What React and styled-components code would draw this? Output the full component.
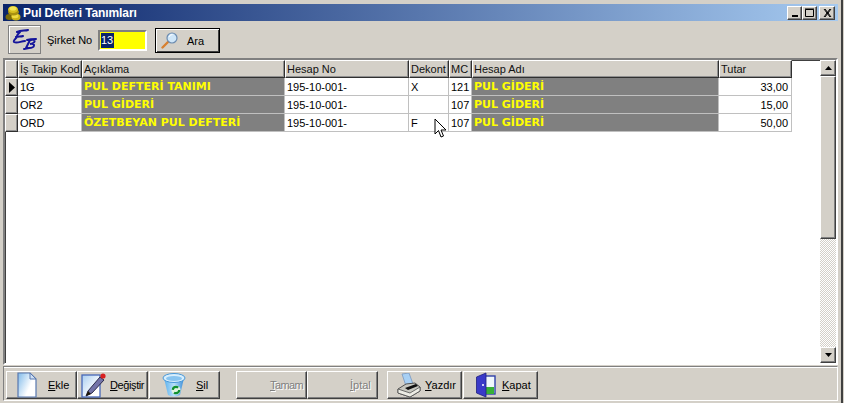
import React from "react";
import styled, { createGlobalStyle, css } from "styled-components";

const Global = createGlobalStyle`
  html, body { margin: 0; padding: 0; background: #d4d0c8; }
  body { font-family: "Liberation Sans", Arial, sans-serif; font-size: 11px; color: #000; overflow: hidden; }
`;

const COLS = "13px 64px 203px 124px 40px 23px 247px 73px";

const Win = styled.div`
  box-sizing: border-box;
  width: 843px; height: 403px;
  background: #d4d0c8;
  padding: 4px 3px 2px 3px;
  display: flex; flex-direction: column;
  border-right: 2px solid #404040;
  position: relative;
`;
const TitleBar = styled.div`
  height: 17px; flex: none;
  background: linear-gradient(90deg, #0a246a, #a6caf0);
  display: flex; align-items: center; padding: 0 3px 0 2px;
  color: #fff; font: bold 12px "Liberation Sans", sans-serif;
  gap: 2px;
`;
const TitleText = styled.span` flex: 1; letter-spacing: -0.1px; `;
const WinBtns = styled.div` display: flex; `;
const raised = css`
  background: #d4d0c8;
  border: 1px solid;
  border-color: #fff #404040 #404040 #fff;
  box-shadow: inset -1px -1px 0 #808080;
  box-sizing: border-box;
`;
const WinBtn = styled.div`
  ${raised}
  width: ${p => (p.$gap ? 16 : 15)}px; height: 14px;
  margin-left: ${p => (p.$gap ? 2 : 0)}px;
  display: flex; align-items: center; justify-content: center;
`;
const ToolBar = styled.div`
  height: 37px; flex: none;
  display: flex; align-items: center;
  padding: 0 0 0 5px;
`;
const LogoBtn = styled.div`
  box-sizing: border-box;
  width: 33px; height: 29px;
  border: 1px solid #808080;
  box-shadow: inset 1px 1px 0 #fff;
  display: flex; align-items: center; justify-content: center;
`;
const Label = styled.span`
  margin-left: 6px; width: 51px; font-size: 11px;
`;
const CodeInput = styled.div`
  box-sizing: border-box;
  margin-top: 2px;
  width: 49px; height: 21px;
  background: #ff0;
  border: 2px solid; border-color: #808080 #fff #fff #808080;
  padding: 1px 0 0 1px;
  font-size: 11px; line-height: 15px;
`;
const Sel = styled.span`background: #0a246a; color: #fff; display: inline-block; height: 15px; padding-right: 1px;`;
const AraBtn = styled.div`
  box-sizing: border-box;
  margin: 2px 0 0 8px;
  width: 65px; height: 25px;
  background: #d4d0c8;
  border: 1px solid #000;
  box-shadow: inset 1px 1px 0 #fff, inset -1px -1px 0 #404040;
  display: flex; align-items: center; padding-left: 5px;
  font-size: 11px;
  span { margin-left: 9px; }
`;
const GridBox = styled.div`
  flex: none;
  height: 307px; box-sizing: border-box;
  background: #fff;
  border: 2px solid; border-color: #808080 #fff #fff #808080;
  display: flex;
  box-shadow: inset 1px 1px 0 #404040;
`;
const Table = styled.div` flex: 1; `;
const Row = styled.div`
  display: grid; grid-template-columns: ${COLS};
  height: 18px;
`;
const headStyle = css`
  background: #d4d0c8;
  box-sizing: border-box;
  border: 1px solid; border-color: #fff #303030 #303030 #fff;
  box-shadow: inset -1px -1px 0 #909090;
`;
const HeadCell = styled.div`
  ${headStyle}
  padding: 1px 0 0 1px; line-height: 14px; font-size: 11px;
  white-space: nowrap; overflow: hidden; color: #111;
`;
const Indicator = styled.div`
  ${headStyle}
  display: flex; align-items: center; justify-content: center;
`;
const Cell = styled.div`
  box-sizing: border-box;
  border-right: 1px solid #c0c0c0; border-bottom: 1px solid #c0c0c0;
  background: ${p => (p.$dark ? "#808080" : "#fff")};
  color: ${p => (p.$dark ? "#ffff00" : "#000")};
  font: ${p => (p.$dark ? 'bold 11px "DejaVu Sans", sans-serif' : '11px "Liberation Sans", sans-serif')};
  text-align: ${p => (p.$right ? "right" : "left")};
  padding: 0 ${p => (p.$right ? 3 : 0)}px 0 2px; line-height: 18px;
  white-space: nowrap; overflow: hidden;
`;
const Scroll = styled.div`
  width: 16px; flex: none;
  display: flex; flex-direction: column;
  background-color: #fff;
  background-image: repeating-conic-gradient(#d4d0c8 0 25%, #fff 0 50%);
  background-size: 2px 2px;
`;
const ScrollBtn = styled.div`
  ${raised}
  width: 16px; height: 16px; flex: none;
  display: flex; align-items: center; justify-content: center;
`;
const Thumb = styled.div`
  ${raised}
  width: 16px; height: 163px; flex: none;
`;
const Track = styled.div` flex: 1; `;
const Footer = styled.div`
  flex: 1; display: flex; align-items: flex-start;
  padding: 4px 0 0 2px;
  margin-top: 1px;
  border: 1px solid; border-color: #808080 #fff #fff #808080;
  box-shadow: inset 0 1px 0 #fff;
`;
const Btn = styled.div`
  ${raised}
  height: 28px; width: ${p => p.$w}px;
  margin-left: ${p => p.$ml || 0}px;
  display: flex; align-items: center;
  padding-left: ${p => p.$pl ?? 4}px;
  font-size: 11px; color: ${p => (p.$off ? "#808080" : "#000")};
  text-shadow: ${p => (p.$off ? "1px 1px 0 #fff" : "none")};
  letter-spacing: ${p => p.$ls || 0}px;
`;
const BtnLabel = styled.span`
  margin-left: ${p => p.$ml}px; white-space: nowrap;
`;
const Pointer = styled.svg`
  position: absolute; left: 434px; top: 118px;
`;

const HEADS = ["İş Takip Kod", "Açıklama", "Hesap No", "Dekont", "MC", "Hesap Adı", "Tutar"];
const ROWS = [
  ["1G", "PUL DEFTERİ TANIMI", "195-10-001-", "X", "121", "PUL GİDERİ", "33,00"],
  ["OR2", "PUL GİDERİ", "195-10-001-", "", "107", "PUL GİDERİ", "15,00"],
  ["ORD", "ÖZETBEYAN PUL DEFTERİ", "195-10-001-", "F", "107", "PUL GİDERİ", "50,00"],
];

const Coins = () => (
  <svg width="16" height="16" viewBox="0 0 16 16">
    <ellipse cx="4.5" cy="12" rx="4" ry="3" fill="#7a6a08" />
    <ellipse cx="11" cy="12" rx="4.5" ry="3.5" fill="#c8b018" />
    <ellipse cx="10" cy="11" rx="3.5" ry="2.2" fill="#f0dc40" />
    <ellipse cx="8.5" cy="7" rx="5.5" ry="3.5" fill="#a89010" />
    <ellipse cx="8" cy="4.5" rx="5" ry="3.5" fill="#d8c020" />
    <ellipse cx="8" cy="3.5" rx="3.5" ry="2" fill="#f4e658" />
  </svg>
);
const Logo = () => (
  <svg width="26" height="22" viewBox="0 0 26 22" fill="none" stroke="#14149a" strokeWidth="2" strokeLinecap="round">
    <path d="M5 3 C9 1 13 2 16 1 M8 3 C6 5 5 6 5 7 M4 8 C6 7 9 8 11 7 M5 8 C3 10 1 12 2 13 C5 15 9 12 13 12" />
    <path d="M15 11 C18 10 22 10 24 10 M18 11 L14 19 M19 11 C24 10 24 14 18 15 C24 14 23 19 17 19 L12 20" />
  </svg>
);
const Magnifier = () => (
  <svg width="17" height="17" viewBox="0 0 17 17">
    <path d="M7 10 L1.5 15.5" stroke="#d88030" strokeWidth="2.4" strokeLinecap="round" />
    <circle cx="11" cy="6" r="5" fill="#cfe6f8" stroke="#6c8cb0" strokeWidth="1.2" />
    <path d="M8 5 a3.5 3.5 0 0 1 3.5 -2.5" stroke="#fff" fill="none" />
  </svg>
);
const Doc = () => (
  <svg width="21" height="26" viewBox="0 0 21 26">
    <defs>
      <linearGradient id="dg" x1="0" y1="0.2" x2="1" y2="0.8"><stop offset="0" stopColor="#8fc2ec" /><stop offset="0.65" stopColor="#fff" /></linearGradient>
    </defs>
    <path d="M1 1 H13 L19 7 V25 H1 Z" fill="url(#dg)" stroke="#5878b0" strokeWidth="1.2" />
    <path d="M13 1 V7 H19 Z" fill="#cfe0f4" stroke="#5878b0" />
  </svg>
);
const Pencil = () => (
  <svg width="25" height="26" viewBox="0 0 25 26">
    <defs>
      <linearGradient id="pg" x1="0" y1="0" x2="1" y2="1"><stop offset="0" stopColor="#a8cdf0" /><stop offset="0.7" stopColor="#fff" /></linearGradient>
    </defs>
    <rect x="1" y="3" width="18" height="22" fill="url(#pg)" stroke="#4868b8" strokeWidth="1.3" />
    <path d="M7 19 L19 5 L23 8 L11 21 L5 24 Z" fill="#7474a8" stroke="#2c2c4c" strokeWidth="1" />
    <path d="M5 24 L7 19 L10 22 Z" fill="#201808" />
    <circle cx="22" cy="4" r="2.6" fill="#d82020" />
  </svg>
);
const Bin = () => (
  <svg width="24" height="26" viewBox="0 0 24 26">
    <defs>
      <linearGradient id="bg" x1="0" y1="0" x2="1" y2="0"><stop offset="0" stopColor="#5ab0ec" /><stop offset="0.5" stopColor="#b8e0fa" /><stop offset="1" stopColor="#3a8cd8" /></linearGradient>
    </defs>
    <path d="M2 6 L6 23 Q12 26 18 23 L22 6 Z" fill="url(#bg)" />
    <ellipse cx="12" cy="6" rx="11" ry="4.5" fill="#d8eefc" stroke="#4898d8" />
    <ellipse cx="12" cy="6.5" rx="8" ry="2.5" fill="#88c4f0" />
    <circle cx="14" cy="18" r="4.5" fill="#e0f4e0" />
    <circle cx="14" cy="18" r="3.2" fill="none" stroke="#109030" strokeWidth="2.2" strokeDasharray="7 3" />
  </svg>
);
const Printer = () => (
  <svg width="24" height="25" viewBox="0 0 24 25">
    <path d="M5 1 L12 0 L16 11 L9 13 Z" fill="#a8d0f4" stroke="#7898c0" strokeWidth="0.8" />
    <path d="M1 16 L9 11 L18 10 L23 14 L23 18 L13 24 L1 20 Z" fill="#c8c8c0" stroke="#505050" strokeWidth="1" />
    <path d="M1 16 L13 20 L23 14 L23 18 L13 24 L1 20 Z" fill="#ecece4" stroke="#505050" strokeWidth="0.8" />
    <path d="M8 15 L19 11 L21 13 L11 17 Z" fill="#101010" />
  </svg>
);
const Door = () => (
  <svg width="20" height="26" viewBox="0 0 20 26">
    <rect x="7" y="4" width="12" height="18" fill="#f0f8fc" stroke="#3040a8" strokeWidth="1.4" />
    <rect x="8" y="15" width="10" height="7" fill="#38b038" />
    <path d="M0.5 5 L10 1 V25 L0.5 21 Z" fill="#3a3ac8" stroke="#202080" strokeWidth="0.8" />
    <circle cx="7" cy="13" r="1" fill="#fff" />
  </svg>
);
const Cursor = () => (
  <Pointer width="13" height="21" viewBox="0 0 13 21">
    <path d="M1 1 V16 L4.5 12.5 L7 19 L9.5 18 L7 12 H12 Z" fill="#fff" stroke="#000" strokeWidth="1" />
  </Pointer>
);

export default function App() {
  return (
    <>
      <Global />
      <Win>
        <TitleBar>
          <Coins />
          <TitleText>Pul Defteri Tanımları</TitleText>
          <WinBtns>
            <WinBtn><svg width="8" height="8"><rect x="1" y="6" width="6" height="2" /></svg></WinBtn>
            <WinBtn><svg width="9" height="9"><path d="M0.5 1.5 H8.5 V8.5 H0.5 Z M0 1 H9" fill="none" stroke="#000" /></svg></WinBtn>
            <WinBtn $gap><svg width="9" height="8"><path d="M1 0 L7 8 M2 0 L8 8 M7 0 L1 8 M8 0 L2 8" stroke="#000" /></svg></WinBtn>
          </WinBtns>
        </TitleBar>
        <ToolBar>
          <LogoBtn><Logo /></LogoBtn>
          <Label>Şirket No</Label>
          <CodeInput><Sel>13</Sel></CodeInput>
          <AraBtn><Magnifier /><span>Ara</span></AraBtn>
        </ToolBar>
        <GridBox>
          <Table>
            <Row>
              <Indicator />
              {HEADS.map(h => <HeadCell key={h}>{h}</HeadCell>)}
            </Row>
            {ROWS.map((r, i) => (
              <Row key={r[0]}>
                <Indicator>
                  {i === 0 && <svg width="6" height="11"><path d="M0 0 L6 5.5 L0 11 Z" /></svg>}
                </Indicator>
                <Cell>{r[0]}</Cell>
                <Cell $dark>{r[1]}</Cell>
                <Cell>{r[2]}</Cell>
                <Cell>{r[3]}</Cell>
                <Cell $right>{r[4]}</Cell>
                <Cell $dark>{r[5]}</Cell>
                <Cell $right>{r[6]}</Cell>
              </Row>
            ))}
          </Table>
          <Scroll>
            <ScrollBtn><svg width="7" height="4"><path d="M3.5 0 L7 4 H0 Z" /></svg></ScrollBtn>
            <Thumb />
            <Track />
            <ScrollBtn><svg width="7" height="4"><path d="M0 0 H7 L3.5 4 Z" /></svg></ScrollBtn>
          </Scroll>
        </GridBox>
        <Footer>
          <Btn $w={71} $pl={10}><Doc /><BtnLabel $ml={10}><u>E</u>kle</BtnLabel></Btn>
          <Btn $w={71} $pl={3} $ls={-0.4}><Pencil /><BtnLabel $ml={4}><u>D</u>eğiştir</BtnLabel></Btn>
          <Btn $w={71} $ml={1} $pl={12}><Bin /><BtnLabel $ml={10}><u>S</u>il</BtnLabel></Btn>
          <Btn $w={71} $ml={16} $off $pl={33} $ls={-0.6}><BtnLabel $ml={0}><u>T</u>amam</BtnLabel></Btn>
          <Btn $w={71} $off $pl={42}><BtnLabel $ml={0}><u>İ</u>ptal</BtnLabel></Btn>
          <Btn $w={75} $ml={9} $pl={9}><Printer /><BtnLabel $ml={4}><u>Y</u>azdır</BtnLabel></Btn>
          <Btn $w={75} $ml={1} $pl={12}><Door /><BtnLabel $ml={6}><u>K</u>apat</BtnLabel></Btn>
        </Footer>
        <Cursor />
      </Win>
    </>
  );
}
